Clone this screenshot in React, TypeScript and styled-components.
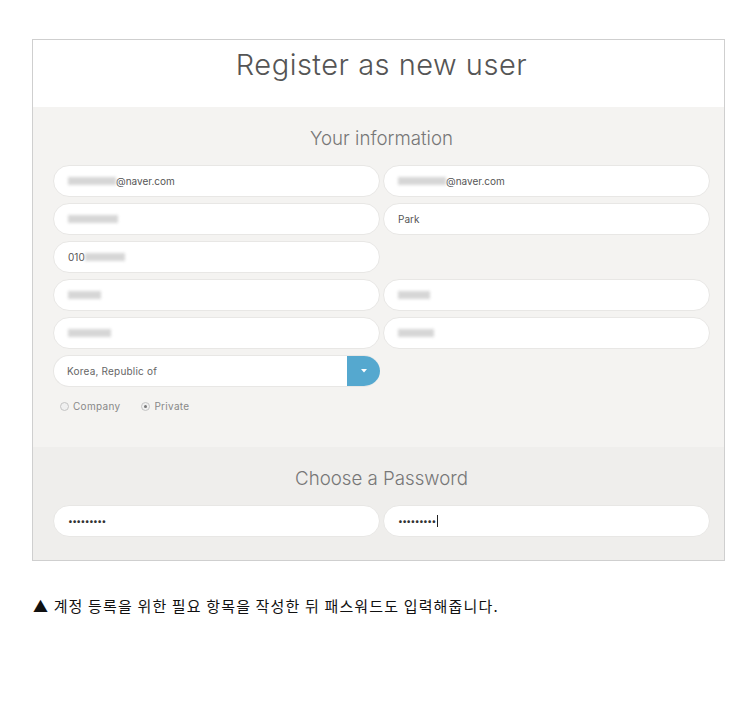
import React from "react";
import styled, { createGlobalStyle } from "styled-components";

const Global = createGlobalStyle`
  html, body { margin: 0; padding: 0; background: #fff; }
  body { font-family: "Inter", "Liberation Sans", sans-serif; }
`;

const Page = styled.div`
  padding: 39px 31px 0 32px;
`;

const Frame = styled.div`
  width: 693px;
  box-sizing: border-box;
  border: 1px solid #cfcfcf;
  background: #fff;
`;

const Header = styled.div`
  height: 67px;
  box-sizing: border-box;
  display: flex;
  justify-content: center;
  padding: 8px 0 0 6px;
`;

const Title = styled.h1`
  margin: 0;
  font-family: "Inter", sans-serif;
  font-weight: 300;
  font-size: 29px;
  line-height: 34px;
  color: #555;
  letter-spacing: 0.5px;
`;

const Section = styled.div<{ $bg: string; $pb: number }>`
  background: ${(p) => p.$bg};
  padding: 20px 14px ${(p) => p.$pb}px 20px;
`;

const SectionTitle = styled.h2`
  margin: 0 0 14px;
  height: 24px;
  line-height: 24px;
  text-align: center;
  font-family: "Inter", sans-serif;
  font-weight: 300;
  font-size: 18.7px;
  color: #777;
`;

const Grid = styled.div`
  display: grid;
  grid-template-columns: 327px 327px;
  column-gap: 3px;
  row-gap: 6px;
`;

const Field = styled.div`
  height: 32px;
  box-sizing: border-box;
  border: 1px solid #e8e7e5;
  border-radius: 16px;
  background: #fff;
  display: flex;
  align-items: center;
  padding-left: 14px;
  font-family: "Inter", sans-serif;
  font-size: 10px;
  color: #555;
  overflow: hidden;
`;

const Blur = styled.span<{ $w: number; $tone?: string }>`
  display: inline-block;
  width: ${(p) => p.$w}px;
  height: 8px;
  background: ${(p) => p.$tone || "#c9c9c9"};
  filter: blur(1.6px);
  opacity: 0.75;
`;

const Empty = styled.div``;

const SelectBox = styled.div`
  height: 32px;
  box-sizing: border-box;
  border: 1px solid #e8e7e5;
  border-right: none;
  border-radius: 16px;
  background: #fff;
  display: flex;
  align-items: stretch;
  overflow: hidden;
`;

const SelectText = styled.div`
  flex: 1;
  display: flex;
  align-items: center;
  padding-left: 13px;
  font-family: "Inter", sans-serif;
  font-size: 10px;
  letter-spacing: 0.2px;
  color: #666;
`;

const SelectButton = styled.div`
  width: 33px;
  background: #55a8cf;
  display: flex;
  align-items: center;
  justify-content: center;
`;

const RadioRow = styled.div`
  display: flex;
  align-items: center;
  gap: 21px;
  padding: 13px 0 0 7px;
  height: 12px;
`;

const RadioLabel = styled.label`
  display: flex;
  align-items: center;
  gap: 4px;
  font-family: "Inter", sans-serif;
  font-size: 10px;
  letter-spacing: 0.3px;
  color: #888;
`;

const RadioDot = styled.span<{ $on?: boolean }>`
  width: 7px;
  height: 7px;
  border-radius: 50%;
  border: 1px solid #c4c4c4;
  background: #f0f0f0;
  display: flex;
  align-items: center;
  justify-content: center;
  &::after {
    content: "";
    width: 3px;
    height: 3px;
    border-radius: 50%;
    background: ${(p) => (p.$on ? "#777" : "transparent")};
  }
`;

const Dots = styled.span`
  font-size: 8.5px;
  letter-spacing: -0.6px;
  color: #333;
  display: flex;
  align-items: center;
`;

const Caret = styled.span`
  display: inline-block;
  width: 1px;
  height: 12px;
  background: #222;
  margin-left: 1px;
`;

const Caption = styled.p`
  margin: 35px 0 0 1px;
  font-family: "Noto Sans CJK KR", "Liberation Sans", sans-serif;
  font-size: 15px;
  letter-spacing: 1.15px;
  color: #111;
  line-height: 20px;
`;

export default function App() {
  return (
    <>
      <Global />
      <Page>
        <Frame>
          <Header>
            <Title>Register as new user</Title>
          </Header>
          <Section $bg="#f4f3f1" $pb={35}>
            <SectionTitle>Your information</SectionTitle>
            <Grid>
              <Field>
                <Blur $w={48} />
                @naver.com
              </Field>
              <Field>
                <Blur $w={48} />
                @naver.com
              </Field>
              <Field>
                <Blur $w={50} />
              </Field>
              <Field>Park</Field>
              <Field>
                010
                <Blur $w={40} />
              </Field>
              <Empty />
              <Field>
                <Blur $w={33} />
              </Field>
              <Field>
                <Blur $w={32} />
              </Field>
              <Field>
                <Blur $w={43} />
              </Field>
              <Field>
                <Blur $w={36} />
              </Field>
              <SelectBox>
                <SelectText>Korea, Republic of</SelectText>
                <SelectButton>
                  <svg width="6" height="4" viewBox="0 0 6 4">
                    <path d="M0 0 L6 0 L3 3.5 Z" fill="#fff" />
                  </svg>
                </SelectButton>
              </SelectBox>
            </Grid>
            <RadioRow>
              <RadioLabel>
                <RadioDot />
                Company
              </RadioLabel>
              <RadioLabel>
                <RadioDot $on />
                Private
              </RadioLabel>
            </RadioRow>
          </Section>
          <Section $bg="#efeeec" $pb={23}>
            <SectionTitle>Choose a Password</SectionTitle>
            <Grid>
              <Field>
                <Dots>•••••••••</Dots>
              </Field>
              <Field>
                <Dots>
                  •••••••••
                  <Caret />
                </Dots>
              </Field>
            </Grid>
          </Section>
        </Frame>
        <Caption>▲ 계정 등록을 위한 필요 항목을 작성한 뒤 패스워드도 입력해줍니다.</Caption>
      </Page>
    </>
  );
}
